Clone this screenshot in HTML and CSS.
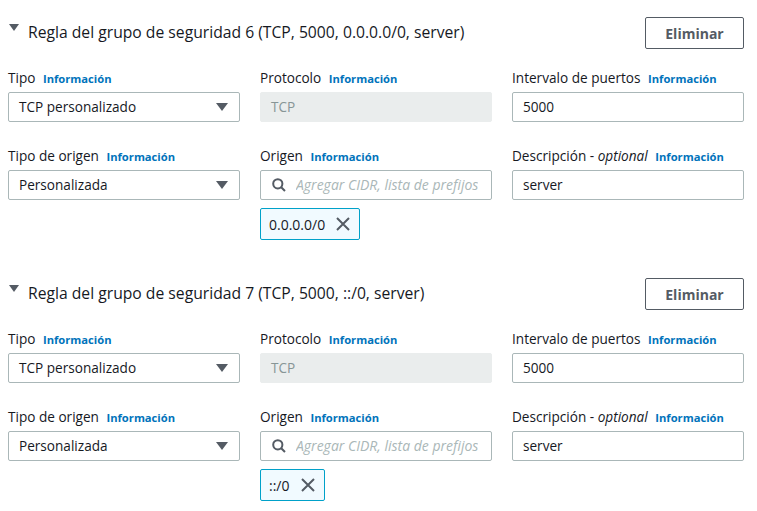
FILE: index.html
```html
<!DOCTYPE html>
<html lang="es">
<head>
<meta charset="utf-8">
<link rel="stylesheet" href="styles.css">
</head>
<body>
<div class="page">
  <section class="rule">
    <div class="rule-head">
      <div class="rule-title"><span class="caret"></span><span>Regla del grupo de seguridad 6 (TCP, 5000, 0.0.0.0/0, server)</span></div>
      <button class="btn">Eliminar</button>
    </div>
    <div class="grid">
      <div class="field">
        <div class="label">Tipo <a class="info">Información</a></div>
        <div class="input select"><span>TCP personalizado</span><span class="sel-caret"></span></div>
      </div>
      <div class="field">
        <div class="label">Protocolo <a class="info">Información</a></div>
        <div class="input disabled">TCP</div>
      </div>
      <div class="field">
        <div class="label">Intervalo de puertos <a class="info">Información</a></div>
        <div class="input">5000</div>
      </div>
      <div class="field">
        <div class="label">Tipo de origen <a class="info">Información</a></div>
        <div class="input select"><span>Personalizada</span><span class="sel-caret"></span></div>
      </div>
      <div class="field">
        <div class="label">Origen <a class="info">Información</a></div>
        <div class="input search">
          <svg class="search-icon" width="14" height="14" viewBox="0 0 14 14"><circle cx="5.8" cy="5.8" r="4.6" fill="none" stroke="#545b64" stroke-width="2"/><line x1="9.2" y1="9.2" x2="13" y2="13" stroke="#545b64" stroke-width="2"/></svg>
          <span class="placeholder">Agregar CIDR, lista de prefijos</span>
        </div>
        <div class="token"><span>0.0.0.0/0</span><svg class="x" width="14" height="14" viewBox="0 0 14 14"><path d="M1 1 L13 13 M13 1 L1 13" stroke="#545b64" stroke-width="2"/></svg></div>
      </div>
      <div class="field">
        <div class="label">Descripción - <i>optional</i> <a class="info">Información</a></div>
        <div class="input">server</div>
      </div>
    </div>
  </section>

  <section class="rule">
    <div class="rule-head">
      <div class="rule-title"><span class="caret"></span><span>Regla del grupo de seguridad 7 (TCP, 5000, ::/0, server)</span></div>
      <button class="btn">Eliminar</button>
    </div>
    <div class="grid">
      <div class="field">
        <div class="label">Tipo <a class="info">Información</a></div>
        <div class="input select"><span>TCP personalizado</span><span class="sel-caret"></span></div>
      </div>
      <div class="field">
        <div class="label">Protocolo <a class="info">Información</a></div>
        <div class="input disabled">TCP</div>
      </div>
      <div class="field">
        <div class="label">Intervalo de puertos <a class="info">Información</a></div>
        <div class="input">5000</div>
      </div>
      <div class="field">
        <div class="label">Tipo de origen <a class="info">Información</a></div>
        <div class="input select"><span>Personalizada</span><span class="sel-caret"></span></div>
      </div>
      <div class="field">
        <div class="label">Origen <a class="info">Información</a></div>
        <div class="input search">
          <svg class="search-icon" width="14" height="14" viewBox="0 0 14 14"><circle cx="5.8" cy="5.8" r="4.6" fill="none" stroke="#545b64" stroke-width="2"/><line x1="9.2" y1="9.2" x2="13" y2="13" stroke="#545b64" stroke-width="2"/></svg>
          <span class="placeholder">Agregar CIDR, lista de prefijos</span>
        </div>
        <div class="token"><span>::/0</span><svg class="x" width="14" height="14" viewBox="0 0 14 14"><path d="M1 1 L13 13 M13 1 L1 13" stroke="#545b64" stroke-width="2"/></svg></div>
      </div>
      <div class="field">
        <div class="label">Descripción - <i>optional</i> <a class="info">Información</a></div>
        <div class="input">server</div>
      </div>
    </div>
  </section>
</div>
</body>
</html>
```
FILE: styles.css
```css
* { box-sizing: border-box; }
html, body { margin: 0; padding: 0; background: #fff; }
body {
  font-family: "Open Sans", "Noto Sans", Arial, sans-serif;
  font-size: 13.6px;
  color: #16191f;
}
.page {
  padding: 17px 12px 0 8px;
  display: flex;
  flex-direction: column;
  gap: 38px;
}
.rule-head {
  display: flex;
  align-items: center;
  justify-content: space-between;
  height: 32px;
}
.rule-title {
  display: flex;
  align-items: center;
  font-size: 15.7px;
  line-height: 20px;
  padding-bottom: 3px;
}
.caret {
  width: 0; height: 0;
  border-left: 5px solid transparent;
  border-right: 5px solid transparent;
  border-top: 7px solid #545b64;
  margin: -8px 9px 0 1px;
}
.btn {
  width: 99px;
  height: 32px;
  margin-right: 1px;
  border: 1px solid #545b64;
  border-radius: 2px;
  background: #fff;
  color: #545b64;
  font-family: inherit;
  font-size: 14px;
  font-weight: 700;
  padding: 0;
}
.grid {
  display: grid;
  grid-template-columns: repeat(3, 232px);
  column-gap: 20px;
  row-gap: 24px;
  margin-top: 19px;
}
.field { display: flex; flex-direction: column; }
.label {
  height: 20px;
  line-height: 20px;
  margin-bottom: 4px;
  white-space: nowrap;
}
.info {
  color: #0073bb;
  font-size: 11.2px;
  font-weight: 700;
  line-height: 1;
  margin-left: 4px;
}
.input {
  height: 30px;
  border: 1px solid #aab7b8;
  border-radius: 2px;
  padding: 0 10px;
  display: flex;
  align-items: center;
  line-height: 20px;
}
.input.disabled {
  background: #eaeded;
  border-color: #eaeded;
  color: #879596;
}
.select { justify-content: space-between; }
.sel-caret {
  width: 0; height: 0;
  border-left: 6px solid transparent;
  border-right: 6px solid transparent;
  border-top: 8px solid #545b64;
  margin-right: 1px;
}
.search { padding-left: 11px; gap: 10px; }
.search-icon { flex: none; }
.placeholder {
  color: #aab7b8;
  font-size: 14px;
  font-style: italic;
  white-space: nowrap;
  overflow: hidden;
}
.token {
  align-self: flex-start;
  margin-top: 8px;
  height: 32px;
  border: 1px solid #00a1c9;
  border-radius: 2px;
  background: #f1faff;
  display: flex;
  align-items: center;
  gap: 11px;
  padding: 0 9px 0 8px;
  font-size: 14px;
}
.x { flex: none; }
```
